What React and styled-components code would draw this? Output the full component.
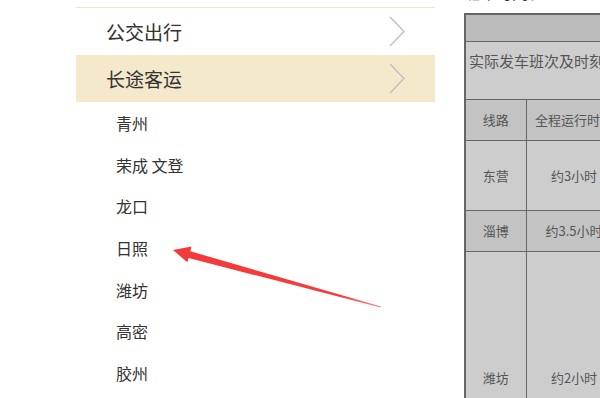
import React from "react";
import styled, { createGlobalStyle } from "styled-components";

const Global = createGlobalStyle`
  html, body {
    margin: 0;
    padding: 0;
    background: #ffffff;
    width: 600px;
    height: 398px;
    overflow: hidden;
  }
  body {
    font-family: "Noto Sans CJK SC", "Noto Sans", sans-serif;
  }
`;

const Page = styled.div`
  position: relative;
  display: flex;
  align-items: flex-start;
  width: 600px;
  height: 398px;
  overflow: hidden;
  padding-left: 76px;
  box-sizing: border-box;
`;

const Menu = styled.div`
  width: 359px;
  flex-shrink: 0;
  margin-top: 7px;
  border-top: 1px solid #f1e6c6;
  display: flex;
  flex-direction: column;
`;

const MenuRow = styled.div`
  height: 47px;
  display: flex;
  align-items: center;
  justify-content: space-between;
  padding: 0 30px 1px 30px;
  box-sizing: border-box;
  background: ${(p) => (p.$active ? "#f4e9cb" : "#ffffff")};
  font-size: 19px;
  color: #333333;
`;

const SubList = styled.div`
  display: flex;
  flex-direction: column;
  padding-top: 0;
`;

const SubItem = styled.div`
  height: 41.7px;
  display: flex;
  align-items: center;
  padding-left: 40px;
  font-size: 16px;
  color: #333333;
`;

const Right = styled.div`
  margin-left: 29px;
  display: flex;
  flex-direction: column;
  flex-shrink: 0;
`;

const Caption = styled.div`
  margin-top: -16px;
  height: 16px;
  line-height: 16px;
  font-size: 16px;
  color: #333;
  white-space: nowrap;
`;

const Table = styled.table`
  margin-top: 13px;
  border-collapse: collapse;
  border: 2px solid #666666;
  width: 360px;
  table-layout: fixed;
  font-size: 13px;
  color: #555555;
`;

const Row = styled.tr`
  background: ${(p) => (p.$shade === "dark" ? "#bcbcbc" : p.$shade === "mid" ? "#c3c3c3" : "#cdcdcd")};
  height: ${(p) => p.$h}px;
`;

const Cell = styled.td`
  border: 1px solid #666666;
  padding: 0;
  text-align: ${(p) => (p.$left ? "left" : "center")};
  vertical-align: ${(p) => (p.$top ? "top" : "middle")};
  padding-left: ${(p) => (p.$left ? "3px" : "0")};
  padding-top: ${(p) => (p.$top ? "8px" : "0")};
  font-size: ${(p) => (p.$big ? "15px" : "13px")};
  white-space: nowrap;
  overflow: hidden;
`;

const Chevron = () => (
  <svg width="16" height="31" viewBox="0 0 16 31">
    <polyline points="1,1 15,15.5 1,30" fill="none" stroke="#bdbdbd" strokeWidth="1.3" />
  </svg>
);

const ArrowLayer = styled.svg`
  position: absolute;
  left: 0;
  top: 0;
  pointer-events: none;
`;

const subs = ["青州", "荣成 文登", "龙口", "日照", "潍坊", "高密", "胶州"];

export default function App() {
  return (
    <>
      <Global />
      <Page>
        <Menu>
          <MenuRow>
            <span>公交出行</span>
            <Chevron />
          </MenuRow>
          <MenuRow $active>
            <span>长途客运</span>
            <Chevron />
          </MenuRow>
          <SubList>
            {subs.map((s) => (
              <SubItem key={s}>{s}</SubItem>
            ))}
          </SubList>
        </Menu>
        <Right>
          <Caption>班车时刻表</Caption>
          <Table>
            <colgroup>
              <col style={{ width: 61 }} />
              <col style={{ width: 96 }} />
              <col style={{ width: 203 }} />
            </colgroup>
            <tbody>
              <Row $shade="dark" $h={27}>
                <Cell colSpan={3} />
              </Row>
              <Row $shade="light" $h={58}>
                <Cell colSpan={3} $left $top $big>
                  实际发车班次及时刻以车站公布为准
                </Cell>
              </Row>
              <Row $shade="mid" $h={41}>
                <Cell>线路</Cell>
                <Cell>全程运行时间</Cell>
                <Cell>发车时间</Cell>
              </Row>
              <Row $shade="light" $h={70}>
                <Cell>东营</Cell>
                <Cell>约3小时</Cell>
                <Cell />
              </Row>
              <Row $shade="mid" $h={41}>
                <Cell>淄博</Cell>
                <Cell>约3.5小时</Cell>
                <Cell />
              </Row>
              <Row $shade="light" $h={254}>
                <Cell>潍坊</Cell>
                <Cell>约2小时</Cell>
                <Cell />
              </Row>
            </tbody>
          </Table>
        </Right>
        <ArrowLayer width="600" height="398" viewBox="0 0 600 398">
          <defs>
            <linearGradient id="fade" x1="173" y1="250" x2="381" y2="307" gradientUnits="userSpaceOnUse">
              <stop offset="0" stopColor="#f33a3a" />
              <stop offset="0.8" stopColor="#f53c3c" />
              <stop offset="1" stopColor="#fb8a8a" />
            </linearGradient>
          </defs>
          <polygon
            points="173,250 191.5,246.5 190.4,251.3 381,306.5 380.6,307.5 188.6,258 187.3,262.2"
            fill="url(#fade)"
          />
        </ArrowLayer>
      </Page>
    </>
  );
}
